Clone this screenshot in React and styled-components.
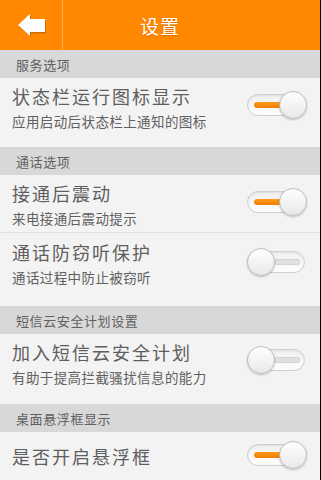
import React, { useState } from "react";
import styled, { createGlobalStyle } from "styled-components";

const GlobalStyle = createGlobalStyle`
  body {
    margin: 0;
    background: #000;
    font-family: "Noto Sans CJK SC", "Noto Sans", sans-serif;
  }
`;

const Page = styled.div`
  width: 320px;
  height: 480px;
  overflow: hidden;
  background: #f3f3f3;
`;

const Header = styled.div`
  display: grid;
  grid-template-columns: 62px 1px 1fr 63px;
  height: 50px;
  background: #ff8800;
`;

const BackBtn = styled.button`
  display: flex;
  align-items: center;
  justify-content: flex-start;
  padding: 0 0 0 18px;
  border: none;
  background: transparent;
  cursor: pointer;
`;

const HeaderLine = styled.div`
  background: #ffb15c;
`;

const Title = styled.div`
  display: flex;
  align-items: center;
  justify-content: center;
  color: #fff;
  font-size: 19px;
  letter-spacing: 1px;
  text-shadow: 0 1px 1px rgba(150, 70, 0, 0.35);
`;

const SectionHeader = styled.div`
  height: 28px;
  display: flex;
  align-items: center;
  padding-left: 16px;
  background: #d8d8d8;
  color: #606060;
  font-size: 13px;
  letter-spacing: 0.6px;
`;

const Row = styled.div`
  display: flex;
  justify-content: space-between;
  align-items: flex-start;
  height: ${(p) => p.$h}px;
  box-sizing: border-box;
  padding: 0 13px 0 12px;
  border-bottom: ${(p) => (p.$line ? "1px solid #e2e2e2" : "none")};
`;

const Texts = styled.div`
  display: flex;
  flex-direction: column;
  padding-top: ${(p) => p.$top}px;
`;

const ItemTitle = styled.div`
  font-size: 18px;
  line-height: 24px;
  letter-spacing: 2px;
  color: #5e5e5e;
`;

const ItemSub = styled.div`
  margin-top: 3px;
  font-size: 13.5px;
  line-height: 20px;
  letter-spacing: 0.4px;
  color: #606060;
`;

const SwitchBox = styled.div`
  position: relative;
  width: 60px;
  height: 28px;
  margin-top: ${(p) => p.$top}px;
  cursor: pointer;
  flex-shrink: 0;
`;

const Track = styled.div`
  position: absolute;
  left: 0;
  top: 3px;
  width: 58px;
  height: 22px;
  box-sizing: border-box;
  border-radius: 11px;
  border: 1px solid #cfcfcf;
  background: linear-gradient(#f0f0f0, #fdfdfd);
  box-shadow: inset 0 1px 2px rgba(0, 0, 0, 0.08);
`;

const Fill = styled.div`
  position: absolute;
  top: 7px;
  height: 6px;
  border-radius: 3px;
  left: ${(p) => (p.$on ? "6px" : "26px")};
  width: ${(p) => (p.$on ? "30px" : "26px")};
  background: ${(p) =>
    p.$on ? "linear-gradient(#ff9a1a, #f07f00)" : "#e0e0e0"};
  box-shadow: ${(p) => (p.$on ? "none" : "inset 0 0 0 1px #d4d4d4")};
`;

const Knob = styled.div`
  position: absolute;
  top: 0;
  left: ${(p) => (p.$on ? "32px" : "0")};
  width: 28px;
  height: 28px;
  box-sizing: border-box;
  border-radius: 50%;
  border: 1px solid #bdbdbd;
  background: linear-gradient(#ffffff, #e8e8e8);
  box-shadow: 0 1px 2px rgba(0, 0, 0, 0.22);
`;

const Switch = ({ on, top, onToggle }) => (
  <SwitchBox $top={top} onClick={onToggle}>
    <Track>
      <Fill $on={on} />
    </Track>
    <Knob $on={on} />
  </SwitchBox>
);

const BackArrow = () => (
  <svg width="28" height="23" viewBox="0 0 28 23">
    <polygon
      points="0,11.5 12,0.5 12,5.5 27,5.5 27,18.5 12,18.5 12,22.5"
      fill="rgba(120,60,0,0.35)"
      transform="translate(1,1)"
    />
    <polygon
      points="0,11 12,0 12,5 27,5 27,18 12,18 12,22"
      fill="#ffffff"
    />
  </svg>
);

const sections = [
  {
    name: "服务选项",
    items: [
      { title: "状态栏运行图标显示", sub: "应用启动后状态栏上通知的图标", h: 69, top: 6, sw: 13, on: true },
    ],
  },
  {
    name: "通话选项",
    items: [
      { title: "接通后震动", sub: "来电接通后震动提示", h: 58, top: 6, sw: 13, on: true, line: true },
      { title: "通话防窃听保护", sub: "通话过程中防止被窃听", h: 73, top: 7, sw: 15, on: false },
    ],
  },
  {
    name: "短信云安全计划设置",
    items: [
      { title: "加入短信云安全计划", sub: "有助于提高拦截骚扰信息的能力", h: 70, top: 6, sw: 12, on: false },
    ],
  },
  {
    name: "桌面悬浮框显示",
    items: [{ title: "是否开启悬浮框", h: 47, top: 12, sw: 9, on: true }],
  },
];

export default function App() {
  const [states, setStates] = useState(() =>
    sections.map((s) => s.items.map((i) => i.on))
  );

  const toggle = (si, ii) => {
    setStates((prev) =>
      prev.map((row, a) => row.map((v, b) => (a === si && b === ii ? !v : v)))
    );
  };

  return (
    <>
      <GlobalStyle />
      <Page>
        <Header>
          <BackBtn>
            <BackArrow />
          </BackBtn>
          <HeaderLine />
          <Title>设置</Title>
          <div />
        </Header>
        {sections.map((s, si) => (
          <div key={s.name}>
            <SectionHeader>{s.name}</SectionHeader>
            {s.items.map((it, ii) => (
              <Row key={it.title} $h={it.h} $line={it.line}>
                <Texts $top={it.top}>
                  <ItemTitle>{it.title}</ItemTitle>
                  {it.sub && <ItemSub>{it.sub}</ItemSub>}
                </Texts>
                <Switch
                  on={states[si][ii]}
                  top={it.sw}
                  onToggle={() => toggle(si, ii)}
                />
              </Row>
            ))}
          </div>
        ))}
      </Page>
    </>
  );
}
